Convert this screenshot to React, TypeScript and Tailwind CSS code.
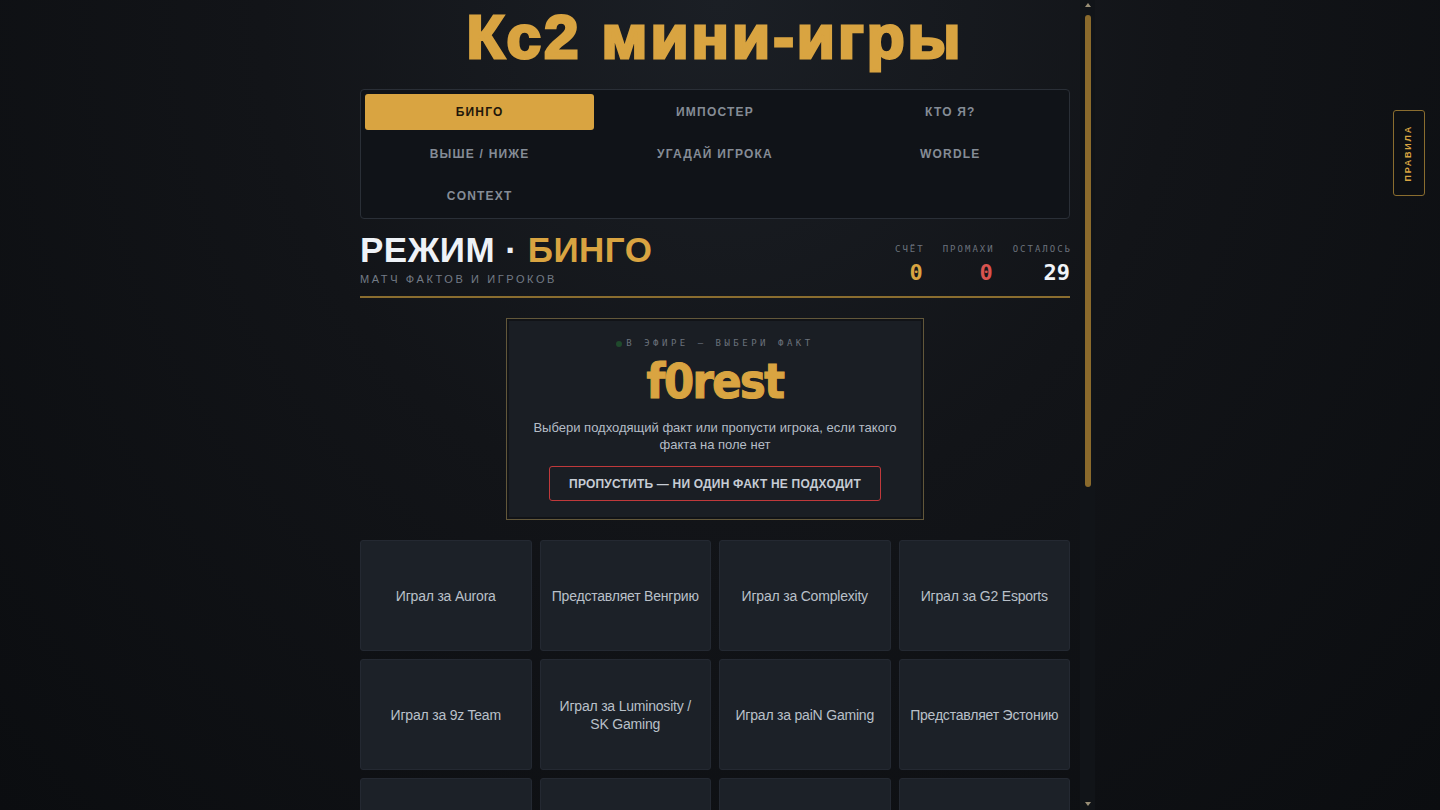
const tabs = ['Бинго', 'Импостер', 'Кто я?', 'Выше / ниже', 'Угадай игрока', 'Wordle', 'Context'];

const facts = [
  'Играл за Aurora',
  'Представляет Венгрию',
  'Играл за Complexity',
  'Играл за G2 Esports',
  'Играл за 9z Team',
  'Играл за Luminosity / SK Gaming',
  'Играл за paiN Gaming',
  'Представляет Эстонию',
  'Играл за Ninjas in Pyjamas',
  'Представляет Швецию',
  'Играл за Fnatic',
  'Выигрывал мейджор',
  'Играл за Heroic',
  'Представляет Данию',
  'Играл за ENCE',
  'Представляет Францию',
];

const stats = [
  { label: 'СЧЁТ', value: '0', color: 'text-[#d9a441]' },
  { label: 'ПРОМАХИ', value: '0', color: 'text-[#d9534f]' },
  { label: 'ОСТАЛОСЬ', value: '29', color: 'text-[#f1f4f8]' },
];

export default function App() {
  return (
    <div className="relative h-[810px] w-full overflow-hidden bg-[#0d0f12] bg-[radial-gradient(ellipse_at_50%_0%,#1b1f25_0%,#121418_45%,#0b0d10_100%)] font-['Liberation_Sans',Arial,sans-serif]">
      <div className="relative mx-auto h-[810px] w-[750px]">
        <div className="h-full overflow-y-auto pl-[15px] pr-[25px] [scrollbar-width:none]">
          <div className="pb-[330px]">
            <h1 className="pt-[6px] text-center text-[62px] font-bold leading-none tracking-[3px] text-[#d9a441] [-webkit-text-stroke:3px_#d9a441]">
              Кс2 мини-игры
            </h1>

            <div className="mt-[21px] grid grid-cols-3 gap-[6px] rounded-[4px] border border-[#2a2f37] bg-[#101318] p-[4px]">
              {tabs.map((tab, i) => (
                <div
                  key={tab}
                  className={
                    i === 0
                      ? 'flex h-[36px] items-center justify-center rounded-[3px] bg-[#d9a441] text-[12px] font-bold uppercase tracking-[1.2px] text-[#22160a]'
                      : 'flex h-[36px] items-center justify-center rounded-[3px] text-[12px] font-bold uppercase tracking-[1.2px] text-[#858c96]'
                  }
                >
                  {tab}
                </div>
              ))}
            </div>

            <div className="mt-[13px] flex items-end justify-between border-b-2 border-[#8a6d2f] pb-[11px]">
              <div>
                <h2 className="text-[35px] font-bold leading-none tracking-[0.5px] text-[#eef2f7]">
                  РЕЖИМ · <span className="text-[#d9a441]">БИНГО</span>
                </h2>
                <p className="mt-[7px] text-[11px] leading-none tracking-[2.6px] text-[#737b86]">МАТЧ ФАКТОВ И ИГРОКОВ</p>
              </div>
              <div className="mb-[1px] flex gap-[20px] font-['DejaVu_Sans_Mono',monospace]">
                {stats.map((s) => (
                  <div key={s.label} className="text-right">
                    <div className="mr-[-2px] text-[9px] leading-none tracking-[2px] text-[#6b727c]">{s.label}</div>
                    <div className={`mt-[8px] text-[22px] font-bold leading-none ${s.color}`}>{s.value}</div>
                  </div>
                ))}
              </div>
            </div>

            <div className="mx-auto mt-[20px] w-[418px] border border-[#62573a] bg-[#1a1e24] px-[24px] pb-[18px] pt-[20px] text-center shadow-[inset_0_0_0_2px_#111317]">
              <div className="flex items-center justify-center gap-[4px]">
                <span className="h-[6px] w-[6px] rounded-full bg-[#1f4a2c]" />
                <span className="font-['DejaVu_Sans_Mono',monospace] text-[9px] leading-none tracking-[3.5px] text-[#6b727c]">
                  В ЭФИРЕ — ВЫБЕРИ ФАКТ
                </span>
              </div>
              <div className="mt-[9px] font-['DejaVu_Sans_Condensed','DejaVu_Sans',sans-serif] text-[48px] font-bold leading-none tracking-[-1.5px] text-[#d9a441] [-webkit-text-stroke:1.2px_#d9a441]">
                f0rest
              </div>
              <p className="mt-[14px] text-[13px] leading-[17px] text-[#b5bdc7]">
                Выбери подходящий факт или пропусти игрока, если такого факта на поле нет
              </p>
              <button className="mt-[13px] inline-flex h-[35px] items-center rounded-[3px] border border-[#c0393b] px-[19px] text-[12px] font-bold tracking-[0.2px] text-[#c6ccd4]">
                ПРОПУСТИТЬ — НИ ОДИН ФАКТ НЕ ПОДХОДИТ
              </button>
            </div>

            <div className="mt-[20px] grid grid-cols-4 gap-[8px]">
              {facts.map((fact) => (
                <div
                  key={fact}
                  className="flex h-[111px] items-center justify-center rounded-[3px] border border-[#242932] bg-[#1c2128] px-[10px] text-center text-[14px] leading-[18px] tracking-[-0.2px] text-[#b9c0c9]"
                >
                  {fact}
                </div>
              ))}
            </div>
          </div>
        </div>

        {/* scrollbar */}
        <div aria-hidden className="absolute right-0 top-0 flex h-full w-[15px] flex-col items-center bg-[#111418] pb-[4px] pt-[3px]">
          <span className="h-0 w-0 border-x-[3px] border-b-[4px] border-x-transparent border-b-[#9a8f76]" />
          <span className="mt-[8px] h-[472px] w-[6px] rounded-full bg-[#8a6a2c]" />
          <span className="mt-auto h-0 w-0 border-x-[3px] border-t-[4px] border-x-transparent border-t-[#9a8f76]" />
        </div>
      </div>

      <button className="absolute right-[15px] top-[110px] flex h-[86px] w-[32px] items-center justify-center rounded-[3px] border border-[#8a6d2f] bg-[#0e1013]">
        <span className="rotate-180 text-[9px] font-bold tracking-[1.8px] text-[#d9a441] [writing-mode:vertical-rl]">ПРАВИЛА</span>
      </button>
    </div>
  );
}
